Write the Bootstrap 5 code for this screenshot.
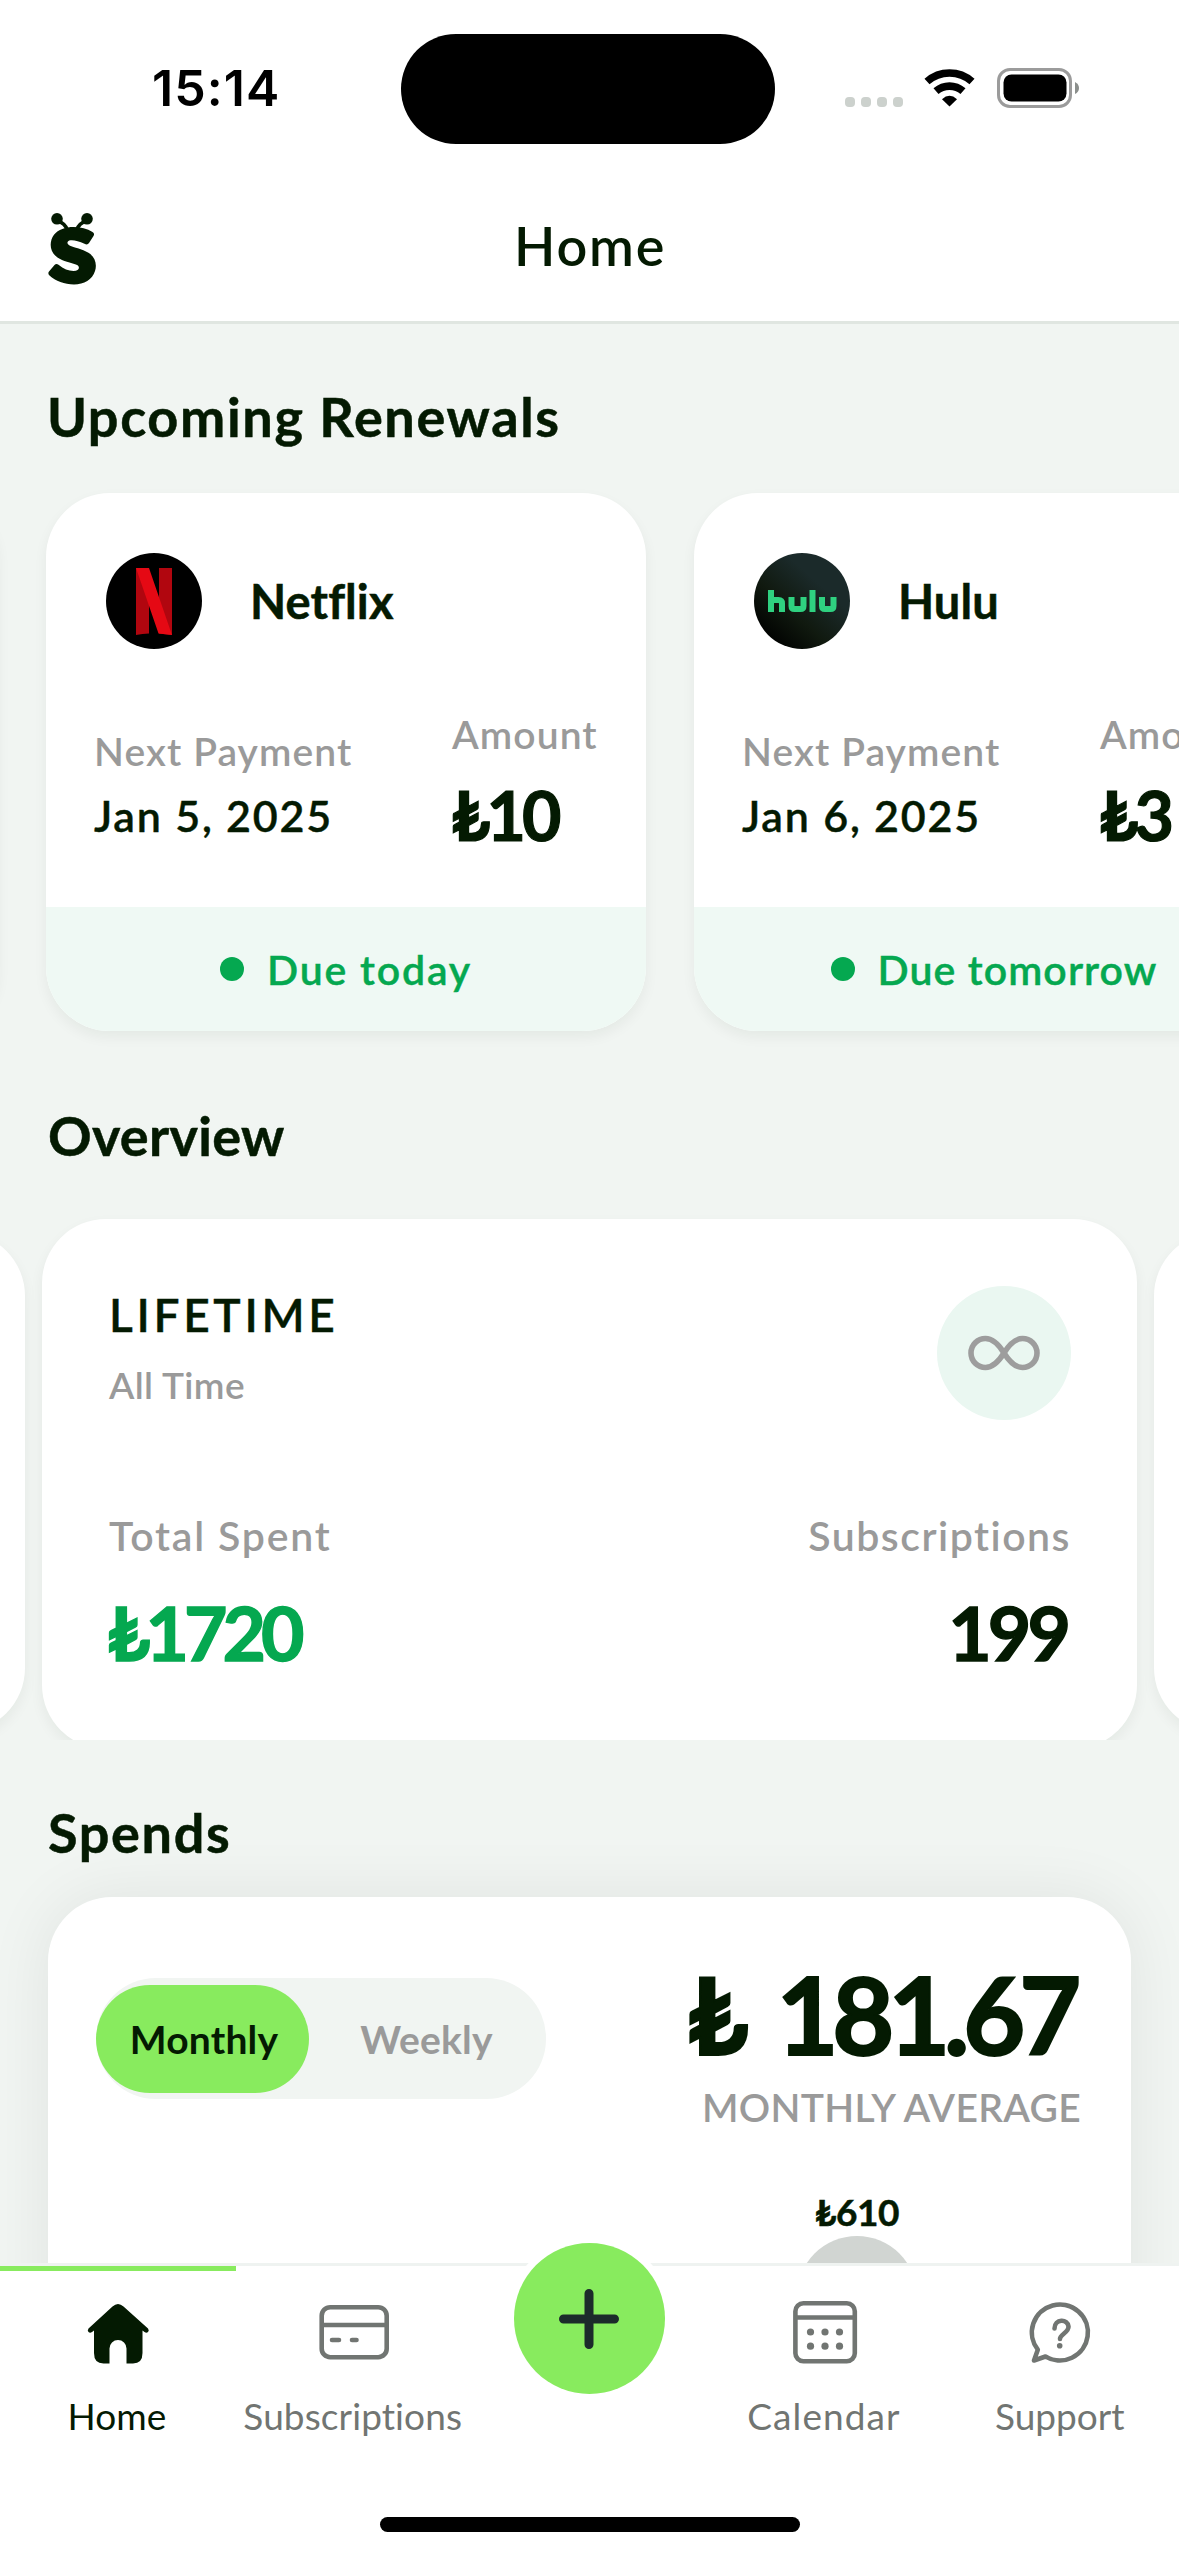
<!DOCTYPE html>
<html lang="en">
<head>
<meta charset="utf-8">
<meta name="viewport" content="width=device-width, initial-scale=1">
<title>Home</title>
<link href="https://cdn.jsdelivr.net/npm/bootstrap@5.3.0/dist/css/bootstrap.min.css" rel="stylesheet">
<style>
:root{--ink:#041a02;--muted-ink:#9a9a9a;--tab-ink:#717572;--brand:#88eb5e;--green:#05a850;--canvas:#f1f5f2;--mint:#eff9f4}
body{font-family:Lato,"Liberation Sans",sans-serif;color:var(--ink);background:#fff;font-variant-ligatures:none}
.screen{width:1179px;height:2556px}
svg{display:block;flex:none}
.statusbar{height:177px;padding:34px 98px 0 152px}
.clock{width:250px;font:600 50px/60px Inter,"Liberation Sans",sans-serif;letter-spacing:1.1px;color:#000;padding-top:24px}
.island{width:375px;height:110px;border-radius:55px;background:#000}
.sysicons{margin-left:70px;margin-top:34px}
.titlebar{height:147px;border-bottom:3px solid #e0e6e1;padding:0 48px}
.logo{margin-top:35px;width:466px}
.page-title{font-size:54px;line-height:60px;font-weight:600;letter-spacing:1.8px;margin-top:39px}
.feed{height:1939px;background:var(--canvas)}
.sec-title{font-size:54px;line-height:64px;font-weight:700;margin:0 0 0 47px;letter-spacing:1.65px;color:var(--ink);position:relative;top:1px;-webkit-text-stroke:.5px}
.renewals{margin-top:45px;gap:48px;padding-left:46px;position:relative}
.r-card{width:600px;height:538px;border-radius:64px;box-shadow:0 6px 14px rgba(0,30,0,.055);overflow:hidden;background:#fff;border:0}
.r-prev{margin-left:-648px}
.r-head{padding:60px 0 0 60px;gap:48px;height:156px}
.r-name{font-size:47px;line-height:56px;font-weight:700;letter-spacing:.1px;-webkit-text-stroke:.5px}
.r-body{height:258px;padding:61px 0 0 48px}
.r-left{width:358px;padding-top:17px}
.lbl{font-size:39px;line-height:48px;font-weight:600;color:var(--muted-ink);letter-spacing:1.1px}
.r-date{font-size:43px;line-height:52px;font-weight:600;margin-top:15px;letter-spacing:1.8px;-webkit-text-stroke:.4px}
.r-amt{font-size:68px;line-height:80px;font-weight:700;letter-spacing:-4px;margin:17px 0 0 -1px;-webkit-text-stroke:1.2px}
.r-foot{height:124px;background:var(--mint);color:var(--green);font-size:41px;line-height:50px;font-weight:600;gap:23px;-webkit-text-stroke:.4px}
.r-foot span{padding-top:2px}
.r-foot i{width:24px;height:24px;border-radius:50%;background:var(--green);margin-top:-1px}
.overview{height:573px;padding-top:52px;overflow:hidden;gap:17px}
.o-card{flex:none;width:1095px;height:530px;border-radius:64px;background:#fff;box-shadow:0 6px 14px rgba(0,30,0,.055);border:0;padding:67px 66px 0 67px}
.o-side{height:500px;margin-top:13px}
.o-side:first-child{margin-left:-1070px}
.o-title{font-size:46px;line-height:56px;font-weight:600;letter-spacing:3.7px;margin-top:1px;-webkit-text-stroke:.4px}
.o-sub{font-size:37px;line-height:46px;font-weight:600;color:var(--muted-ink);letter-spacing:.4px;margin-top:19px}
.o-ring{width:134px;height:134px;border-radius:50%;background:#eaf7f1}
.o-lbl{font-size:41px;line-height:50px;font-weight:600;color:var(--muted-ink);letter-spacing:1.9px}
.o-big{font-size:75px;line-height:88px;font-weight:700;letter-spacing:-3.9px;margin-top:27px;-webkit-text-stroke:1.4px}
.spend{width:1083px;height:600px;margin:33px 48px 0;border-radius:64px;border:0;background:#fff;box-shadow:0 0 66px rgba(0,30,0,.075)}
.seg{width:450px;height:121px;border-radius:60px;background:var(--canvas);margin:81px 0 0 48px}
.seg span{font-size:39px;line-height:48px;font-weight:700;letter-spacing:.2px}
.seg .on{width:213px;height:108px;border-radius:54px;background:var(--brand);padding-left:3px}
.seg .off{width:236px;padding-right:1px;color:var(--muted-ink)}
.avg{margin:57px 50px 0 0}
.avg-num{font-size:107px;line-height:120px;font-weight:700;letter-spacing:-6.2px;word-spacing:14px;margin-right:6px;-webkit-text-stroke:2px}
.avg-lbl{font-size:39px;line-height:48px;font-weight:600;color:var(--muted-ink);letter-spacing:.3px;margin-top:9px}
.barcol{width:120px;margin:58px 0 0 749px}
.barcol b{font-size:37px;line-height:46px;font-weight:700;letter-spacing:-.4px;-webkit-text-stroke:.5px}
.barcol div{width:120px;height:300px;border-radius:60px;background:#d1d5d2;margin-top:1px}
.tabs{height:293px;border-top:3px solid #eff3f1;background:#fff;position:relative}
.tabs .tab{width:235.8px;border-top:5px solid transparent;font-size:37px;line-height:46px;color:var(--tab-ink)}
.tabs .tab.on{border-color:var(--brand);color:var(--ink)}
.tab svg{margin-top:26px;margin-bottom:16px}
.tab span{margin-left:-2px}
.fab{width:151px;height:151px;border-radius:50%;background:var(--brand);box-shadow:0 0 0 7px #fff;margin-top:-23px;margin-left:42px;position:relative}
.homebar{width:420px;height:15px;border-radius:8px;background:#000;margin:0 auto 24px}
</style>
</head>
<body>
<div class="screen d-flex flex-column overflow-hidden">
  <header>
    <div class="statusbar d-flex">
      <div class="clock">15:14</div>
      <div class="island"></div>
      <svg class="sysicons" width="236" height="44" viewBox="0 0 236 44">
        <g fill="#ccd1cd"><rect y="29" width="10" height="10" rx="4"/><rect x="16" y="29" width="10" height="10" rx="4"/><rect x="32" y="29" width="10" height="10" rx="4"/><rect x="48" y="29" width="10" height="10" rx="4"/></g>
        <g fill="none" stroke="#000" stroke-width="7.6"><path d="M82 13.500A34 34 0 0 1 127 13.500"/><path d="M91 23.200A20.500 20.500 0 0 1 118 23.200"/></g>
        <path d="M97 31.200Q104.500 24.400 112 31.200L104.500 38.500Z"/>
        <rect x="153.500" y="1.500" width="72" height="37" rx="11.500" fill="none" stroke="#9b9b9b" stroke-width="3"/>
        <rect x="158.500" y="6.500" width="63" height="27" rx="8"/>
        <path d="M230 14Q234 16 234 20T230 26Z" fill="#8b8f8c"/>
      </svg>
    </div>
    <div class="titlebar d-flex">
      <div class="logo">
        <svg width="49" height="74" viewBox="0 0 49 74">
          <g fill="#041a02"><circle cx="9" cy="6.800" r="5.800"/><circle cx="39" cy="6.800" r="5.800"/></g>
          <g fill="none" stroke="#041a02"><path d="M10 9Q16.500 11 19.500 18M38 9Q31.500 11 28.500 18" stroke-width="3.600"/></g>
          <path fill="#041a02" d="M20 15.500C28 14.200 38 16 44.500 20Q47 21.700 45.500 24L41 31Q39.500 33.300 36.500 31.800C31 29 26 27.800 22.500 28.200C18.500 28.800 18.500 32.200 22 33.700C27 35.700 34 37 40 40.500C47 44.500 49.300 52 47 59C44.500 67.500 36 72.500 26 72.500C16.500 72.500 7.500 69 1.500 63.500Q-.5 61.500 1 59.500L6.500 53Q8.300 51 10.500 52.800C15.500 57 20.500 59 25.500 59C31.500 59 32.500 54.500 28.500 52.800C23 50.500 15 49.500 9.500 45.500C3 41 1.500 34 3.500 27.500C6 20.500 12 16.700 20 15.500Z"/>
        </svg>
      </div>
      <div class="page-title">Home</div>
    </div>
  </header>

  <main class="feed overflow-hidden">
    <h2 class="sec-title" style="padding-top:60px">Upcoming Renewals</h2>
    <section class="renewals d-flex">
      <article class="card r-card r-prev flex-shrink-0"></article>
      <article class="card r-card flex-shrink-0">
        <div class="r-head d-flex align-items-center">
          <svg width="96" height="96" viewBox="0 0 96 96"><circle cx="48" cy="48" r="48"/><path d="M30 15h13v65.500q-6.500.3-13 1.500zM53 15h13v67q-6.500-1-13-1.500z" fill="#b1060f"/><path d="M30 15h13l23 67q-7-1-13.500-1.500z" fill="#e50914"/></svg>
          <div class="r-name">Netflix</div>
        </div>
        <div class="r-body d-flex">
          <div class="r-left"><div class="lbl">Next Payment</div><div class="r-date">Jan 5, 2025</div></div>
          <div><div class="lbl">Amount</div><div class="r-amt">₺10</div></div>
        </div>
        <div class="r-foot d-flex align-items-center justify-content-center"><i></i><span style="letter-spacing:1.8px">Due today</span></div>
      </article>
      <article class="card r-card flex-shrink-0">
        <div class="r-head d-flex align-items-center">
          <svg width="96" height="96" viewBox="0 0 96 96"><defs><linearGradient id="hg" x1=".15" y1=".85" x2=".65" y2=".3"><stop offset="0" stop-color="#020402"/><stop offset=".45" stop-color="#10190f"/><stop offset="1" stop-color="#1b2a2a"/></linearGradient></defs><circle cx="48" cy="48" r="48" fill="url(#hg)"/>
            <g fill="none" stroke="#2fd180" stroke-width="6"><path d="M17 37v22M17 52q0-5 2-5h5.500q3.500 0 3.500 3.500v8.500" /><path d="M37.500 44v9q0 3 3 3h6q3 0 3-3v-9"/><path d="M58.500 37v22"/><path d="M68 44v9q0 3 3 3h5.500q3 0 3-3v-9"/></g></svg>
          <div class="r-name">Hulu</div>
        </div>
        <div class="r-body d-flex">
          <div class="r-left"><div class="lbl">Next Payment</div><div class="r-date">Jan 6, 2025</div></div>
          <div><div class="lbl">Amount</div><div class="r-amt">₺3</div></div>
        </div>
        <div class="r-foot d-flex align-items-center justify-content-center"><i></i><span style="letter-spacing:1.1px">Due tomorrow</span></div>
      </article>
    </section>

    <h2 class="sec-title" style="padding-top:72px;letter-spacing:.3px;text-indent:1px">Overview</h2>
    <section class="overview d-flex">
      <article class="o-card o-side"></article>
      <article class="o-card">
        <div class="d-flex justify-content-between">
          <div><div class="o-title">LIFETIME</div><div class="o-sub">All Time</div></div>
          <div class="o-ring d-flex align-items-center justify-content-center">
            <svg width="74" height="38" viewBox="0 0 74 38" fill="none" stroke="#9d9d9d" stroke-width="5.600"><path d="M37 19C32 11 26.500 4.500 18.500 4.500A14.500 14.500 0 0 0 18.500 33.500C26.500 33.500 32 27 37 19C42 11 47.500 4.500 55.500 4.500A14.500 14.500 0 0 1 55.500 33.500C47.500 33.500 42 27 37 19Z"/></svg>
          </div>
        </div>
        <div class="d-flex justify-content-between" style="margin-top:91px">
          <div><div class="o-lbl" style="letter-spacing:1.8px">Total Spent</div><div class="o-big" style="color:var(--green);letter-spacing:-5px;margin-left:-2px">₺1720</div></div>
          <div class="text-end"><div class="o-lbl" style="letter-spacing:1.5px">Subscriptions</div><div class="o-big" style="margin-right:4px">199</div></div>
        </div>
      </article>
      <article class="o-card o-side"></article>
    </section>

    <h2 class="sec-title" style="padding-top:60px;text-indent:1px">Spends</h2>
    <section class="spend">
      <div class="d-flex justify-content-between align-items-start">
        <div class="seg d-flex align-items-center">
          <span class="on d-flex align-items-center justify-content-center">Monthly</span>
          <span class="off text-center">Weekly</span>
        </div>
        <div class="avg text-end"><div class="avg-num">₺ 181.67</div><div class="avg-lbl">MONTHLY AVERAGE</div></div>
      </div>
      <div class="barcol d-flex flex-column align-items-center"><b>₺610</b><div></div></div>
    </section>
  </main>

  <nav class="tabs d-flex flex-column justify-content-between">
    <div class="d-flex">
      <div class="tab on d-flex flex-column align-items-center">
        <svg width="70" height="80" viewBox="0 0 70 80"><path d="M29.500 9.500Q35 4.500 40.500 9.500L65 31.500Q66.500 33.500 65 35Q63.500 36.500 61.500 35L59.500 33.500V56Q59.500 66.500 50 66.500H43.500V51.500A8.500 8.500 0 0 0 26.500 51.500V66.500H20.500Q11 66.500 11 56V33.500L9 35Q7 36.500 5.500 35Q4 33.500 5.500 31.500Z" fill="#041a02"/></svg>
        <span>Home</span>
      </div>
      <div class="tab d-flex flex-column align-items-center">
        <svg width="76" height="80" viewBox="0 0 76 80" fill="none" stroke="#717572" stroke-width="4.600"><rect x="5.700" y="10.200" width="65" height="50" rx="8.500"/><path d="M5.700 28h65"/><path d="M16 43h7M36 43h4.500" stroke-linecap="round"/></svg>
        <span style="letter-spacing:.1px">Subscriptions</span>
      </div>
      <div class="fab d-flex align-items-center justify-content-center"><svg width="60" height="60" viewBox="0 0 60 60" stroke="#1c2b2b" stroke-width="9" stroke-linecap="round"><path d="M4.500 30h51M30 4.500v51"/></svg></div>
      <div class="tab d-flex flex-column align-items-center" style="margin-left:42.500px">
        <svg width="76" height="80" viewBox="0 0 76 80" fill="none" stroke="#717572" stroke-width="4.600"><rect x="8.400" y="6.200" width="59.400" height="58" rx="8"/><path d="M8.400 20.500h59.400"/><g fill="#717572" stroke="none"><circle cx="23.500" cy="35" r="3.600"/><circle cx="38" cy="35" r="3.600"/><circle cx="52.500" cy="35" r="3.600"/><circle cx="23.500" cy="49.200" r="3.600"/><circle cx="38" cy="49.200" r="3.600"/><circle cx="52.500" cy="49.200" r="3.600"/></g></svg>
        <span style="letter-spacing:1.1px">Calendar</span>
      </div>
      <div class="tab d-flex flex-column align-items-center">
        <svg width="76" height="80" viewBox="0 0 76 80" fill="none" stroke="#717572" stroke-width="4.600" stroke-linejoin="round" stroke-linecap="round"><path d="M11 63.500L14.800 52.700A28 28 0 1 1 22.500 59.500Z"/><path d="M31.500 31.500C31.500 21.500 45 21.500 45.500 29.500C46 35.500 37 37 37 42"/><circle cx="36.700" cy="48.700" r="2.800" fill="#717572" stroke="none"/></svg>
        <span>Support</span>
      </div>
    </div>
    <div class="homebar"></div>
  </nav>
</div>
<script src="https://cdn.jsdelivr.net/npm/bootstrap@5.3.0/dist/js/bootstrap.bundle.min.js"></script>
</body>
</html>
